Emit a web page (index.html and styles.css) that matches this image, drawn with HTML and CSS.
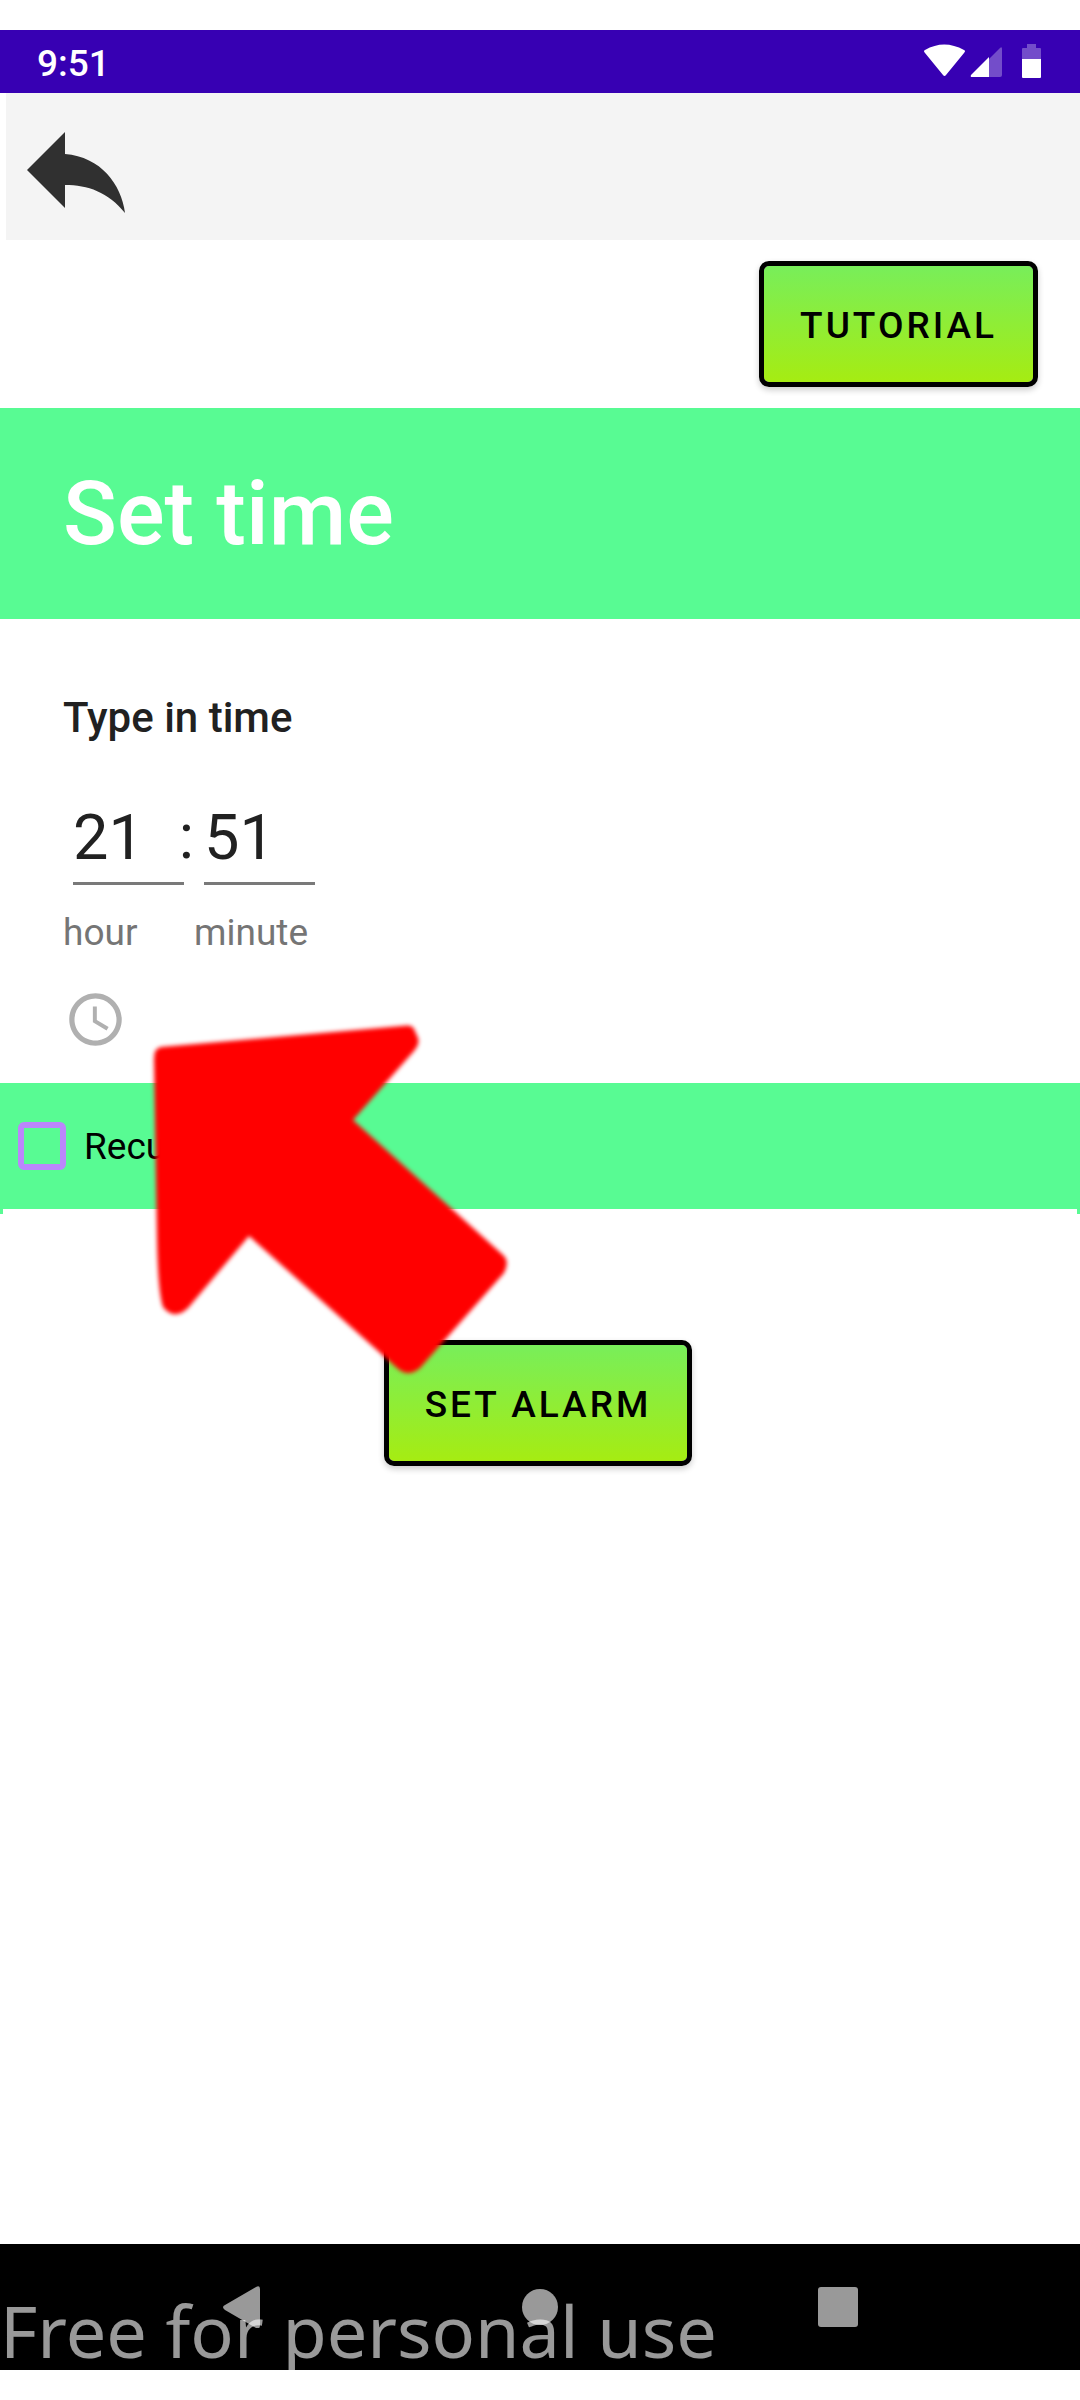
FILE: index.html
```html
<!DOCTYPE html>
<html lang="en">
<head>
<meta charset="utf-8">
<meta name="viewport" content="width=device-width, initial-scale=1">
<title>Set time</title>
<link rel="stylesheet" href="styles.css">
</head>
<body>
<div class="screen">
  <header class="status-bar">
    <span class="status-time">9:51</span>
    <svg class="status-icons" viewBox="0 0 120 36" aria-hidden="true">
      <path fill="#fff" d="M1 9Q-1 7 1 6Q20-5 40 6Q42 7 40 9L22 31Q20.500 33 19 31Z"/>
      <path fill="#fff" fill-opacity=".3" d="M65 15L76 4Q78 2 78 5V31Q78 33 76 33H65Z"/>
      <path fill="#fff" d="M65 13V33H48Q46 33 47 31Z"/>
      <path fill="#fff" fill-opacity=".3" d="M103 0H112V4H116Q117 4 117 5V15H98V5Q98 4 99 4H103Z"/>
      <path fill="#fff" d="M98 15H117V33Q117 34 116 34H99Q98 34 98 33Z"/>
    </svg>
  </header>

  <div class="toolbar">
    <button class="back" type="button" aria-label="Back">
      <svg viewBox="0 0 98 82" aria-hidden="true"><path fill="#303030" d="M0 39L38 1V23C74 26 94 53 98 82C81 61 61 54 38 54V77Z"/></svg>
    </button>
  </div>

  <main class="content">
    <div class="top-actions"><button class="action" type="button">TUTORIAL</button></div>
    <h1 class="title">Set time</h1>

    <section class="picker">
      <h2 class="prompt">Type in time</h2>
      <div class="fields">
        <input class="time-input hour" id="hour" type="text" inputmode="numeric" value="21">
        <span class="colon">:</span>
        <input class="time-input" id="minute" type="text" inputmode="numeric" value="51">
        <label class="caption hour" for="hour">hour</label>
        <label class="caption" for="minute">minute</label>
      </div>
      <button class="mode" type="button" aria-label="Switch to clock">
        <svg viewBox="0 0 24 24" aria-hidden="true"><path fill="#b0b0b0" d="M12 2C6.500 2 2 6.500 2 12s4.500 10 10 10 10-4.500 10-10S17.500 2 12 2zm0 18c-4.420 0-8-3.580-8-8s3.580-8 8-8 8 3.580 8 8-3.580 8-8 8zM12.500 7H11v6l5.200 3.200.8-1.300-4.500-2.700z"/></svg>
      </button>
    </section>

    <div class="repeat">
      <input class="tick" id="recurring" type="checkbox">
      <label for="recurring">Recurring</label>
    </div>
    <div class="repeat-edge"></div>

    <div class="submit"><button class="action" type="button">SET ALARM</button></div>

    <svg class="pointer" viewBox="0 0 362 362" aria-hidden="true">
      <path fill="red" d="M10 27L251 6Q261 4 263 9L267 18Q269 24 263 31L202 100L352 235Q359 241 353 253L269 348Q257 358 246 348L98 216L37 288Q23 301 12 287Q7 272 6 220L3 39Q3 28 10 27Z"/>
    </svg>
  </main>

  <footer class="nav-bar">
    <button class="nav" type="button" aria-label="Back"><svg viewBox="0 0 42 42" aria-hidden="true"><path fill="#999" d="M4 19L35 1Q39-1 39 3V39Q39 44 35 42L4 24Q0 21 4 19Z"/></svg></button>
    <button class="nav" type="button" aria-label="Home"><svg viewBox="0 0 42 42" aria-hidden="true"><circle fill="#999" cx="21" cy="21" r="18"/></svg></button>
    <button class="nav" type="button" aria-label="Overview"><svg viewBox="0 0 42 42" aria-hidden="true"><rect fill="#999" x="1" y="1" width="40" height="40" rx="3"/></svg></button>
    <p class="watermark">Free for personal use</p>
  </footer>
</div>
</body>
</html>
```
FILE: styles.css
```css
* { box-sizing: border-box; }

body {
  margin: 0;
  background: #fff;
  color: #000;
  font-family: Roboto, "Liberation Sans", sans-serif;
  font-size: 37px;
  line-height: 43px;
}

button {
  border: 0;
  padding: 0;
  background: none;
  font: inherit;
  color: inherit;
}

svg { display: block; }

.screen {
  display: flex;
  flex-direction: column;
  min-height: 100vh;
  padding: 30px 0;
}

.status-bar {
  display: flex;
  align-items: center;
  justify-content: space-between;
  height: 63px;
  padding: 0 36px 0 37px;
  background: #3700b3;
  color: #fff;
  font-weight: 500;
}

.status-time { padding-top: 3px; }

.status-icons { width: 120px; height: 36px; }

.toolbar {
  display: flex;
  align-items: center;
  height: 147px;
  margin-left: 6px;
  padding: 10px 21px 0;
  background: #f4f4f4;
}

.back svg { width: 98px; height: 82px; }

.content {
  position: relative;
  flex: 1;
}

.top-actions {
  display: flex;
  justify-content: flex-end;
  padding: 21px 42px;
}

.action {
  height: 126px;
  padding: 2px 36px 0;
  border: 5px solid #000;
  border-radius: 10px;
  background: linear-gradient(#78ee5a, #a6ec12) padding-box;
  box-shadow: 0 3px 6px rgba(0, 0, 0, .2);
  font-weight: 500;
  letter-spacing: 3px;
}

.title {
  display: flex;
  align-items: center;
  height: 211px;
  margin: 0;
  padding: 0 63px;
  background: #58fb93;
  color: #fff;
  font-size: 89px;
  line-height: 104px;
  font-weight: 500;
}

.picker {
  padding: 75px 63px 32px;
  color: #212121;
}

.prompt {
  margin: 0 0 58px;
  font-size: 42px;
  line-height: 48px;
  font-weight: 500;
}

.fields {
  display: grid;
  grid-template-columns: 131px 131px;
  row-gap: 26px;
}

.time-input {
  grid-row: 1;
  grid-column: 2;
  height: 85px;
  min-width: 0;
  margin: 0 10px;
  padding: 0 0 8px;
  border: 0;
  border-bottom: 3px solid #797979;
  border-radius: 0;
  background: none;
  color: inherit;
  font: inherit;
  font-size: 63px;
  line-height: 74px;
}

.hour { grid-column: 1; }

.time-input.hour { grid-column: 1; }

.colon {
  grid-row: 1;
  grid-column: 1;
  justify-self: end;
  font-size: 63px;
  line-height: 74px;
}

.caption {
  grid-row: 2;
  color: #757575;
}

.mode { margin: 34px 0 0 1px; display: block; }
.mode svg { width: 63px; height: 63px; }

.repeat {
  display: flex;
  align-items: center;
  gap: 18px;
  height: 126px;
  padding: 0 18px;
  background: #58fb93;
}

.tick {
  appearance: none;
  width: 48px;
  height: 48px;
  margin: 0;
  border: 6px solid #bb86fc;
  border-radius: 6px;
}

.repeat-edge {
  height: 5px;
  border: solid #58fb93;
  border-width: 0 3px;
}

.submit {
  display: flex;
  justify-content: center;
  padding: 126px 4px 126px 0;
}

/* Tutorial arrow that points at the input mode switch. */
.pointer {
  position: absolute;
  top: 780px;
  left: 151px;
  width: 362px;
  height: 362px;
  filter: blur(2px);
}

.nav-bar {
  position: relative;
  display: grid;
  grid-template-columns: repeat(3, 42px);
  justify-content: center;
  align-items: center;
  column-gap: 256px;
  height: 126px;
  overflow: hidden;
  background: #000;
}

.nav svg { width: 42px; height: 42px; }

.watermark {
  position: absolute;
  left: 0;
  bottom: -9px;
  margin: 0;
  color: rgba(255, 255, 255, .6);
  font-family: "Noto Sans", sans-serif;
  font-size: 72px;
  line-height: 98px;
  white-space: nowrap;
  pointer-events: none;
}
```
